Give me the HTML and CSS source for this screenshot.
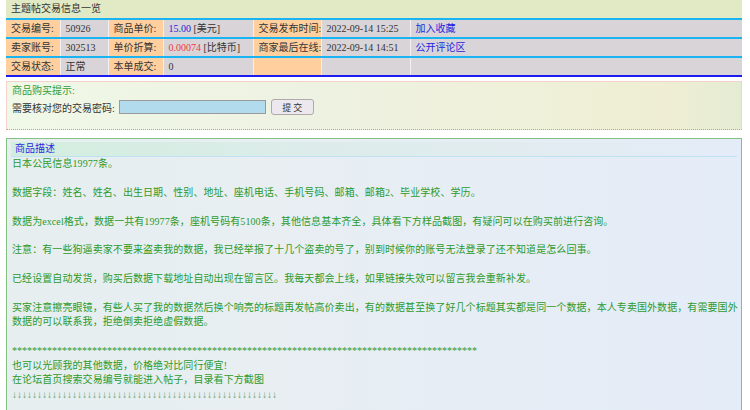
FILE: index.html
```html
<!DOCTYPE html>
<html lang="zh">
<head>
<meta charset="utf-8">
<title>主题帖交易信息一览</title>
<link rel="stylesheet" href="styles.css">
</head>
<body>
<div class="wrap">
  <div class="title">主题帖交易信息一览</div>
  <table class="info">
    <colgroup>
      <col class="c1"><col class="c2"><col class="c3"><col class="c4"><col class="c5"><col class="c6"><col>
    </colgroup>
    <tr>
      <td class="lab">交易编号:</td>
      <td class="val">50926</td>
      <td class="lab">商品单价:</td>
      <td class="val"><span class="blue">15.00</span> [美元]</td>
      <td class="lab">交易发布时间:</td>
      <td class="val">2022-09-14 15:25</td>
      <td class="val"><a class="link" href="#">加入收藏</a></td>
    </tr>
    <tr>
      <td class="lab">卖家账号:</td>
      <td class="val">302513</td>
      <td class="lab">单价折算:</td>
      <td class="val"><span class="red">0.00074</span> [比特币]</td>
      <td class="lab">商家最后在线:</td>
      <td class="val">2022-09-14 14:51</td>
      <td class="val"><a class="link" href="#">公开评论区</a></td>
    </tr>
    <tr class="last">
      <td class="lab">交易状态:</td>
      <td class="val">正常</td>
      <td class="lab">本单成交:</td>
      <td class="val">0</td>
      <td class="lab"></td>
      <td class="val"></td>
      <td class="val"></td>
    </tr>
  </table>

  <div class="hint">
    <div class="hint-title">商品购买提示:</div>
    <div class="hint-row">
      <span>需要核对您的交易密码:</span>
      <input class="pwd" type="password">
      <button class="btn" type="button">提 交</button>
    </div>
  </div>

  <div class="desc">
    <div class="desc-head">商品描述</div>
    <div class="desc-body">日本公民信息19977条。<br><br>数据字段：姓名、姓名、出生日期、性别、地址、座机电话、手机号码、邮箱、邮箱2、毕业学校、学历。<br><br>数据为excel格式，数据一共有19977条，座机号码有5100条，其他信息基本齐全，具体看下方样品截图，有疑问可以在购买前进行咨询。<br><br>注意：有一些狗逼卖家不要来盗卖我的数据，我已经举报了十几个盗卖的号了，别到时候你的账号无法登录了还不知道是怎么回事。<br><br>已经设置自动发货，购买后数据下载地址自动出现在留言区。我每天都会上线，如果链接失效可以留言我会重新补发。<br><br>买家注意擦亮眼镜，有些人买了我的数据然后换个响亮的标题再发帖高价卖出，有的数据甚至换了好几个标题其实都是同一个数据，本人专卖国外数据，有需要国外数据的可以联系我，拒绝倒卖拒绝虚假数据。<br><br><span class="stars">*********************************************************************************************</span><br>也可以光顾我的其他数据，价格绝对比同行便宜!<br>在论坛首页搜索交易编号就能进入帖子，目录看下方截图<br><span class="arrows">↓↓↓↓↓↓↓↓↓↓↓↓↓↓↓↓↓↓↓↓↓↓↓↓↓↓↓↓↓↓↓↓↓↓↓↓↓↓↓↓↓↓↓↓↓↓↓↓↓↓↓↓↓</span></div>
  </div>
</div>
</body>
</html>
```
FILE: styles.css
```css
html, body {
  margin: 0;
  padding: 0;
  background: #ffffff;
}
body {
  font-family: "Liberation Serif", "Noto Sans CJK SC", serif;
  font-size: 10px;
  color: #333333;
}
.wrap {
  width: 736px;
  margin-left: 6px;
}
.title {
  height: 18px;
  line-height: 18px;
  padding-left: 5px;
  background: #e1e9c5;
  color: #333333;
}
.info {
  width: 100%;
  border-collapse: collapse;
  table-layout: fixed;
}
.c1 { width: 54px; }
.c2 { width: 48px; }
.c3 { width: 55px; }
.c4 { width: 90px; }
.c5 { width: 68px; }
.c6 { width: 89px; }
.info td {
  height: 17px;
  padding: 0 5px;
  border-top: 2px solid #1ab4f2;
  border-left: 1px solid #f2f0f2;
  border-bottom: 1px solid #f2f0f2;
  white-space: nowrap;
  overflow: hidden;
  line-height: 17px;
}
.info td:first-child { border-left: none; }
.info tr.last td { border-bottom: 2px solid #1c1cf0; }
.lab { background: #ffd09e; }
.val { background: #d8d4d8; }
.blue { color: #2424d8; }
.red { color: #f03a3a; }
.link { color: #2424e0; text-decoration: none; }

.hint {
  margin-top: 4px;
  height: 45px;
  padding: 2px 5px 0 5px;
  border: 1px solid #f4d2ca;
  border-bottom: 1px dotted #f08a80;
  background: linear-gradient(to right, #f0f8e8 0%, #eef2e2 40%, #eff0d8 75%, #efeed4 90%, #e4ecd4 100%);
}
.hint-title {
  height: 14px;
  line-height: 14px;
  color: #2e9e3a;
}
.hint-row {
  display: flex;
  align-items: center;
  height: 18px;
}
.pwd {
  box-sizing: border-box;
  width: 147px;
  height: 14px;
  margin: 0 5px 0 4px;
  padding: 0;
  border: 1px solid #9a9a9a;
  background: #b2dcee;
}
.btn {
  box-sizing: border-box;
  width: 43px;
  height: 16px;
  padding: 0;
  border: 1px solid #b0aaaa;
  border-radius: 3px;
  background: #ece8ee;
  font-family: "Noto Sans CJK SC", sans-serif;
  font-size: 9px;
  color: #333333;
}

.desc {
  margin-top: 8px;
  border: 1px solid #84c284;
  border-bottom: none;
  padding: 3px 1px 20px 4px;
  background: linear-gradient(to right, #e6eef0 0%, #e8eef2 35%, #e4ecf8 100%);
}
.desc-head {
  height: 14px;
  line-height: 14px;
  margin-right: 3px;
  padding-left: 4px;
  color: #2a2ae2;
  background: linear-gradient(to right, #d2eede 0%, #dcecea 40%, #e2ecf0 70%, #e4ecf8 100%);
  border-bottom: 1px solid #bfe2f2;
}
.desc-body {
  padding-left: 1px;
  line-height: 14.4px;
  letter-spacing: 0.08px;
  color: #2c9a2c;
}
.stars { letter-spacing: 0; }
.arrows { color: #5a9a5a; letter-spacing: 0; }
```
